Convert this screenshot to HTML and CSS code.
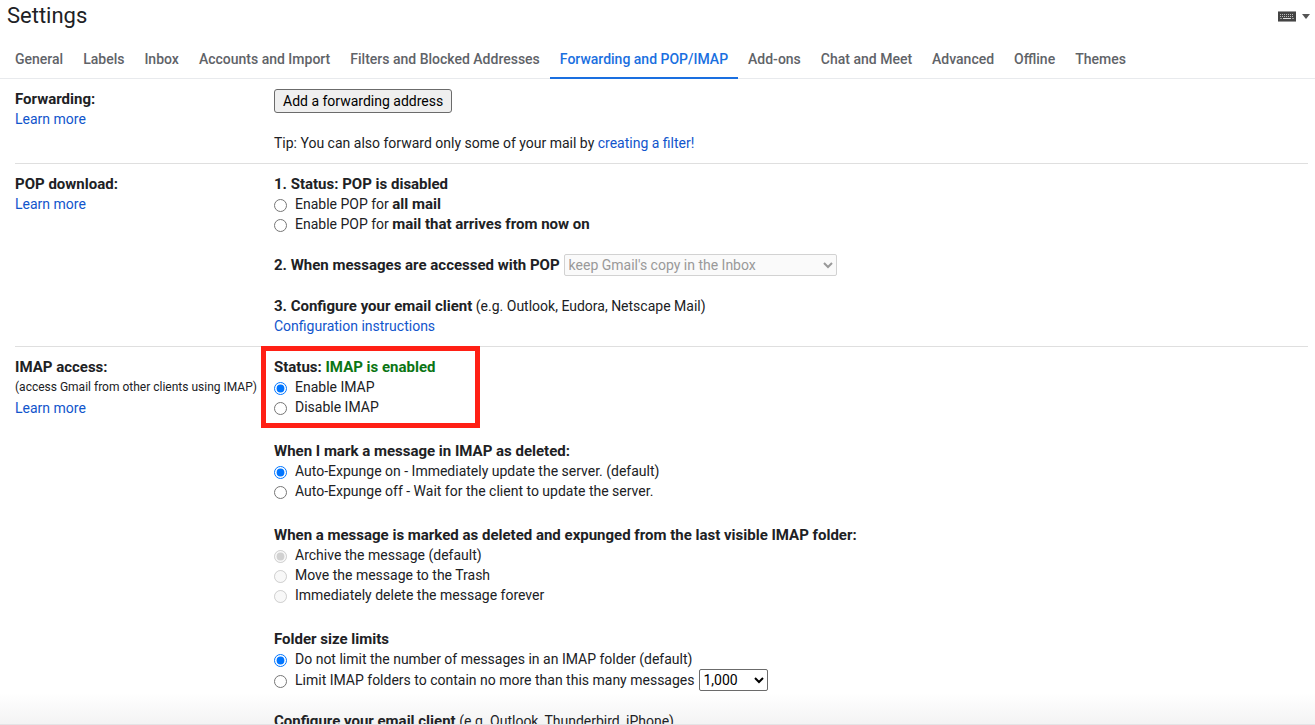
FILE: index.html
```html
<!DOCTYPE html>
<html lang="en">
<head>
<meta charset="utf-8">
<title>Settings</title>
<link rel="stylesheet" href="styles.css">
</head>
<body>
<div class="page">
  <header class="header">
    <h1 class="title">Settings</h1>
    <button class="input-tools" type="button" aria-label="Input tools">
      <svg class="keyboard" width="18" height="11" viewBox="0 0 18 11" aria-hidden="true">
        <rect width="18" height="11" fill="#444"/>
        <path d="M0 .5h18M0 10.5h18" stroke="#999"/>
        <path d="M2 3.5h14M2 5.5h14" stroke="#bbb" stroke-dasharray="1 1"/>
        <path d="M2 7.5h2M14 7.5h2" stroke="#999"/>
        <path d="M5 7.5h8" stroke="#ddd"/>
      </svg>
      <svg class="caret" width="8" height="5" viewBox="0 0 8 5" aria-hidden="true"><path d="M0 0h8L4 5z" fill="#555"/></svg>
    </button>
  </header>
  <nav class="tabs">
    <a class="tab" href="#general">General</a>
    <a class="tab" href="#labels">Labels</a>
    <a class="tab" href="#inbox">Inbox</a>
    <a class="tab" href="#accounts">Accounts and Import</a>
    <a class="tab" href="#filters">Filters and Blocked Addresses</a>
    <a class="tab tab-active" href="#fwdandpop" aria-current="page">Forwarding and POP/IMAP</a>
    <a class="tab" href="#addons">Add-ons</a>
    <a class="tab" href="#chat">Chat and Meet</a>
    <a class="tab" href="#labs">Advanced</a>
    <a class="tab" href="#offline">Offline</a>
    <a class="tab" href="#oldthemes">Themes</a>
  </nav>
  <main class="settings">
    <section class="row">
      <div class="side">
        <h2 class="heading">Forwarding:</h2>
        <a class="link" href="#help-forwarding">Learn more</a>
      </div>
      <div class="content">
        <div><button class="button" type="button">Add a forwarding address</button></div>
        <p class="text">Tip: You can also forward only some of your mail by <a class="link" href="#create-filter">creating a filter!</a></p>
      </div>
    </section>
    <section class="row">
      <div class="side">
        <h2 class="heading">POP download:</h2>
        <a class="link" href="#help-pop">Learn more</a>
      </div>
      <div class="content">
        <div class="group">
          <h3 class="heading">1. Status: POP is disabled</h3>
          <label class="option"><input class="radio" type="radio" name="pop"><span>Enable POP for <b class="strong">all mail</b></span></label>
          <label class="option"><input class="radio" type="radio" name="pop"><span>Enable POP for <b class="strong">mail that arrives from now on</b></span></label>
        </div>
        <div class="inline">
          <label class="heading" for="pop-action">2. When messages are accessed with POP</label>
          <select class="select select-action" id="pop-action" disabled><option>keep Gmail's copy in the Inbox</option></select>
        </div>
        <div class="group">
          <p class="text"><b class="strong">3. Configure your email client</b> (e.g. Outlook, Eudora, Netscape Mail)</p>
          <a class="link" href="#help-pop-config">Configuration instructions</a>
        </div>
      </div>
    </section>
    <section class="row">
      <div class="side">
        <h2 class="heading">IMAP access:</h2>
        <p class="note">(access Gmail from other clients using IMAP)</p>
        <a class="link" href="#help-imap">Learn more</a>
      </div>
      <div class="content content-loose">
        <div class="group highlighted">
          <h3 class="heading">Status: <span class="enabled">IMAP is enabled</span></h3>
          <label class="option"><input class="radio" type="radio" name="imap" checked><span>Enable IMAP</span></label>
          <label class="option"><input class="radio" type="radio" name="imap"><span>Disable IMAP</span></label>
        </div>
        <div class="group">
          <h3 class="heading">When I mark a message in IMAP as deleted:</h3>
          <label class="option"><input class="radio" type="radio" name="expunge" checked><span>Auto-Expunge on - Immediately update the server. (default)</span></label>
          <label class="option"><input class="radio" type="radio" name="expunge"><span>Auto-Expunge off - Wait for the client to update the server.</span></label>
        </div>
        <div class="group">
          <h3 class="heading">When a message is marked as deleted and expunged from the last visible IMAP folder:</h3>
          <label class="option"><input class="radio" type="radio" name="deleted" checked disabled><span>Archive the message (default)</span></label>
          <label class="option"><input class="radio" type="radio" name="deleted" disabled><span>Move the message to the Trash</span></label>
          <label class="option"><input class="radio" type="radio" name="deleted" disabled><span>Immediately delete the message forever</span></label>
        </div>
        <div class="group-stack">
          <div class="group">
            <h3 class="heading">Folder size limits</h3>
            <label class="option"><input class="radio" type="radio" name="limit" checked><span>Do not limit the number of messages in an IMAP folder (default)</span></label>
            <div class="inline">
              <label class="option"><input class="radio" type="radio" name="limit"><span>Limit IMAP folders to contain no more than this many messages</span></label>
              <select class="select select-limit" aria-label="Message limit"><option>1,000</option></select>
            </div>
          </div>
          <p class="text"><b class="strong">Configure your email client</b> (e.g. Outlook, Thunderbird, iPhone)</p>
        </div>
      </div>
    </section>
  </main>
  <div class="fade"></div>
</div>
</body>
</html>
```
FILE: styles.css
```css
*, *::after { box-sizing: border-box; }
body {
  margin: 0;
  background: #fff;
  color: #202124;
  font: 14px/20px Roboto, "Liberation Sans", sans-serif;
}
h1, h2, h3, p { margin: 0; }
.page { position: relative; height: 100vh; overflow: hidden; }
.header {
  display: flex;
  justify-content: space-between;
  padding: 2px 5px 0 7px;
}
.title { font-size: 22px; line-height: 28px; font-weight: 400; }
.input-tools {
  display: flex;
  align-items: center;
  gap: 6px;
  padding: 0;
  border: 0;
  background: none;
}
.tabs {
  display: flex;
  padding: 10px 5px 0;
  border-bottom: 1px solid #e8eaed;
}
.tab {
  padding: 9px 10px 8px;
  margin-bottom: -1px;
  border-bottom: 2px solid transparent;
  color: #5f6368;
  font-weight: 500;
  white-space: nowrap;
  text-decoration: none;
}
.tab-active { color: #1a6fe0; border-color: #1a6fe0; }
.settings { padding: 0 7px 0 15px; }
.row {
  display: grid;
  grid-template-columns: 259px 1fr;
  padding: 10px 0;
}
.row + .row { border-top: 1px solid #dfdfdf; }
.side, .group { display: flex; flex-direction: column; align-items: flex-start; }
.content, .group-stack { display: flex; flex-direction: column; gap: 20px; }
.content-loose { gap: 24px; }
.heading { font-size: 15px; line-height: 20px; font-weight: 700; }
.strong { font-size: 15px; line-height: 16px; }
.note { font-size: 12px; line-height: 21px; white-space: nowrap; }
.link { color: #1155cc; text-decoration: none; }
.enabled { color: #0b7514; }
.button {
  display: block;
  height: 24px;
  padding: 0 8px;
  border: 1px solid #6b6b6b;
  border-radius: 3px;
  background: #efefef;
  color: #000;
  font: inherit;
}
.option { display: flex; align-items: center; gap: 8px; }
.radio { width: 13px; height: 13px; margin: 2px 0 0; }
.inline { display: flex; align-items: center; gap: 4px; }
.select {
  height: 22px;
  padding: 0;
  border: 1px solid #6b6b6b;
  border-radius: 2px;
  background: #fff;
  color: #000;
  font: inherit;
}
.select:disabled { border-color: #d2d2d2; background: #fafafa; color: #999; opacity: 1; }
.select-action { width: 273px; }
.select-limit { width: 69px; }
.highlighted { position: relative; }
.highlighted::after {
  content: "";
  position: absolute;
  inset: -11px auto -11px -13px;
  width: 219px;
  border: 5px solid #ff2015;
  pointer-events: none;
}
.fade {
  position: absolute;
  inset: auto 0 0;
  height: 32px;
  border-bottom: 1px solid #e4e4e6;
  background: linear-gradient(rgba(60, 64, 67, 0), rgba(60, 64, 67, .06));
  pointer-events: none;
}
```
